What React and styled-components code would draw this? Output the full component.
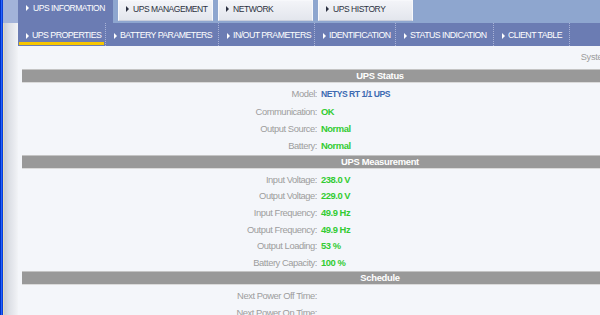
import React from "react";
import styled, { createGlobalStyle } from "styled-components";

const GlobalStyle = createGlobalStyle`
  html, body { margin: 0; padding: 0; overflow: hidden; background: #f4f6fa; }
  body { font-family: "Liberation Sans", Arial, sans-serif; }
`;

const Window = styled.div`
  display: flex;
  width: 600px;
  height: 315px;
  overflow: hidden;
  background: #f4f6fa;
`;

const Edge = styled.div`
  width: 3px;
  flex-shrink: 0;
  background: linear-gradient(to right, #0031c4 0 1px, #2463ff 1px 2px, #0a3fd6 2px);
`;

const Side = styled.div`
  width: 15px;
  flex-shrink: 0;
  background:
    linear-gradient(to bottom, #a2b3d9 0 23px, transparent 23px),
    linear-gradient(to right, #e9dcb4 0 1px, #c8ccd5 1px, #dcdfe5 40%, #eceef2 85%, #f2f4f7);
`;

const Main = styled.div`
  flex: 1;
  min-width: 0;
  display: flex;
  flex-direction: column;
  overflow: hidden;
`;

const TabRow = styled.div`
  height: 23px;
  flex-shrink: 0;
  display: flex;
  gap: 5px;
  align-items: flex-start;
  background: #8ea6cf;
`;

const Tab = styled.div`
  width: 95px;
  height: ${(p) => (p.$active ? 23 : 21)}px;
  box-sizing: border-box;
  display: flex;
  align-items: flex-start;
  gap: 4px;
  padding: 3px 0 0 ${(p) => (p.$active ? 8 : 7)}px;
  font-size: 8.5px;
  letter-spacing: -0.45px;
  line-height: 10px;
  color: ${(p) => (p.$active ? "#ffffff" : "#2c3140")};
  background: ${(p) =>
    p.$active ? "#6b7cb3" : "linear-gradient(to bottom, #f3f4f8, #e3e6ed)"};
  border: ${(p) => (p.$active ? "none" : "1px solid #f7f8fb")};
  border-bottom-color: #c9cedb;
  white-space: nowrap;
  overflow: hidden;
`;

const Arrow = styled.span`
  display: inline-block;
  width: 0;
  height: 0;
  margin-top: ${(p) => p.$top || 2}px;
  border-top: 3px solid transparent;
  border-bottom: 3px solid transparent;
  border-left: 3px solid ${(p) => p.$color || "#ffffff"};
  flex-shrink: 0;
`;

const SubBar = styled.div`
  height: 23px;
  flex-shrink: 0;
  display: flex;
  align-items: stretch;
  background: #6b7cb3;
`;

const SubItem = styled.div`
  position: relative;
  box-sizing: border-box;
  width: ${(p) => p.$w}px;
  flex-shrink: 0;
  display: flex;
  align-items: center;
  gap: 3px;
  padding-left: 8px;
  font-size: 8.8px;
  letter-spacing: -0.55px;
  color: #ffffff;
  white-space: nowrap;
  overflow: hidden;
  border-right: 1px dotted #a9b2d6;
  &::after {
    content: "";
    display: ${(p) => (p.$active ? "block" : "none")};
    position: absolute;
    left: 1px;
    right: 1px;
    bottom: 1px;
    height: 3px;
    background: #f7c600;
  }
`;

const Content = styled.div`
  padding-left: 4px;
  display: flex;
  flex-direction: column;
`;

const InfoLine = styled.div`
  width: 716px;
  height: 23px;
  box-sizing: border-box;
  padding-right: 25px;
  text-align: right;
  font-size: 9.2px;
  letter-spacing: -0.3px;
  line-height: 22px;
  color: #9c9c9c;
  white-space: nowrap;
`;

const Table = styled.div`
  width: 716px;
  display: flex;
  flex-direction: column;
`;

const Header = styled.div`
  height: 12px;
  background: #999999;
  border-top: 1px solid #c4c4c4;
  border-bottom: 1px solid #dadada;
  color: #ffffff;
  font-weight: bold;
  font-size: 9.4px;
  letter-spacing: -0.3px;
  line-height: 12px;
  text-align: center;
`;

const Section = styled.div`
  padding: ${(p) => p.$pad}px 0;
  display: flex;
  flex-direction: column;
`;

const Row = styled.div`
  display: grid;
  grid-template-columns: 296px 1fr;
  align-items: center;
  box-sizing: border-box;
  padding-top: 2px;
  height: ${(p) => p.$h}px;
`;

const Label = styled.div`
  text-align: right;
  padding-right: 1px;
  font-size: 9.4px;
  letter-spacing: -0.45px;
  color: #9d9d9d;
  white-space: nowrap;
`;

const Value = styled.div`
  padding-left: 3px;
  font-weight: bold;
  font-size: ${(p) => (p.$tone === "blue" ? 8.6 : 9.4)}px;
  letter-spacing: ${(p) => (p.$tone === "blue" ? -0.5 : -0.45)}px;
  color: ${(p) => (p.$tone === "blue" ? "#3d6bb2" : "#33cc33")};
  white-space: nowrap;
`;

const tabs = ["UPS INFORMATION", "UPS MANAGEMENT", "NETWORK", "UPS HISTORY"];

const subItems = [
  { label: "UPS PROPERTIES", w: 88, active: true },
  { label: "BATTERY PARAMETERS", w: 113 },
  { label: "IN/OUT PRAMETERS", w: 96 },
  { label: "IDENTIFICATION", w: 81 },
  { label: "STATUS INDICATION", w: 98 },
  { label: "CLIENT TABLE", w: 76 },
];

const sections = [
  {
    title: "UPS Status",
    h: 17.4,
    pad: 1,
    rows: [
      ["Model", "NETYS RT 1/1 UPS", "blue"],
      ["Communication", "OK"],
      ["Output Source", "Normal"],
      ["Battery", "Normal"],
    ],
  },
  {
    title: "UPS Measurement",
    h: 16.6,
    pad: 1.5,
    rows: [
      ["Input Voltage", "238.0 V"],
      ["Output Voltage", "229.0 V"],
      ["Input Frequency", "49.9 Hz"],
      ["Output Frequency", "49.9 Hz"],
      ["Output Loading", "53 %"],
      ["Battery Capacity", "100 %"],
    ],
  },
  {
    title: "Schedule",
    h: 16.6,
    pad: 1.5,
    rows: [
      ["Next Power Off Time", ""],
      ["Next Power On Time", ""],
    ],
  },
];

export default function App() {
  return (
    <>
      <GlobalStyle />
      <Window>
        <Edge />
        <Side />
        <Main>
          <TabRow>
            {tabs.map((t, i) => (
              <Tab key={t} $active={i === 0}>
                <Arrow $color={i === 0 ? "#ffffff" : "#2c3140"} />
                {t}
              </Tab>
            ))}
          </TabRow>
          <SubBar>
            {subItems.map((s) => (
              <SubItem key={s.label} $w={s.w} $active={s.active}>
                <Arrow $top={0} />
                {s.label}
              </SubItem>
            ))}
          </SubBar>
          <Content>
            <InfoLine>System Time: 2011/03/15 10:22:35</InfoLine>
            <Table>
              {sections.map((sec) => (
                <React.Fragment key={sec.title}>
                  <Header>{sec.title}</Header>
                  <Section $pad={sec.pad}>
                    {sec.rows.map(([label, value, tone]) => (
                      <Row key={label} $h={sec.h}>
                        <Label>{label}:</Label>
                        <Value $tone={tone}>{value}</Value>
                      </Row>
                    ))}
                  </Section>
                </React.Fragment>
              ))}
            </Table>
          </Content>
        </Main>
      </Window>
    </>
  );
}
